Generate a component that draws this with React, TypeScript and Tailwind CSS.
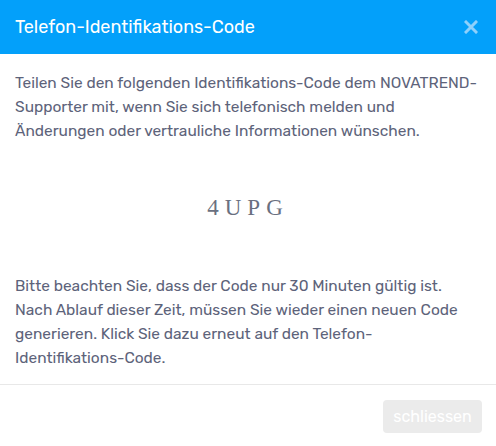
export default function App() {
  return (
    <div className="w-[496px] h-[446px] bg-white flex flex-col font-['Rubik','Open_Sans',sans-serif]">
      {/* Kopfzeile */}
      <div className="h-[54px] bg-[#03a0fa] flex items-center justify-between pl-[15px] pr-[18px]">
        <h2 className="text-white text-[18px] font-normal">Telefon-Identifikations-Code</h2>
        <button className="text-[#8fd0fb]" aria-label="schliessen">
          <svg width="14" height="14" viewBox="0 0 14 14" fill="none">
            <path d="M2 2L12 12M12 2L2 12" stroke="currentColor" strokeWidth="3" strokeLinecap="square" />
          </svg>
        </button>
      </div>

      {/* Inhalt */}
      <div className="px-[15px] pt-[17px] pb-[14px] text-[15.5px] leading-[24px] text-[#5d637a]">
        <p>
          Teilen Sie den folgenden Identifikations-Code dem NOVATREND-Supporter mit, wenn Sie sich telefonisch melden und
          Änderungen oder vertrauliche Informationen wünschen.
        </p>
        <div className="mt-[50px] mb-[51px] text-center font-['Liberation_Serif',serif] text-[23px] leading-[30px] tracking-[6px] text-[#6a7080]">
          4UPG
        </div>
        <p>
          Bitte beachten Sie, dass der Code nur 30 Minuten gültig ist. Nach Ablauf dieser Zeit, müssen Sie wieder einen
          neuen Code generieren. Klick Sie dazu erneut auf den Telefon-Identifikations-Code.
        </p>
      </div>

      {/* Fusszeile */}
      <div className="border-t border-[#e8e8e8] flex justify-end pt-[15px] px-[14px]">
        <button className="h-[33px] w-[99px] rounded-[4px] bg-[#ebebeb] text-white text-[16px]">schliessen</button>
      </div>
    </div>
  );
}
